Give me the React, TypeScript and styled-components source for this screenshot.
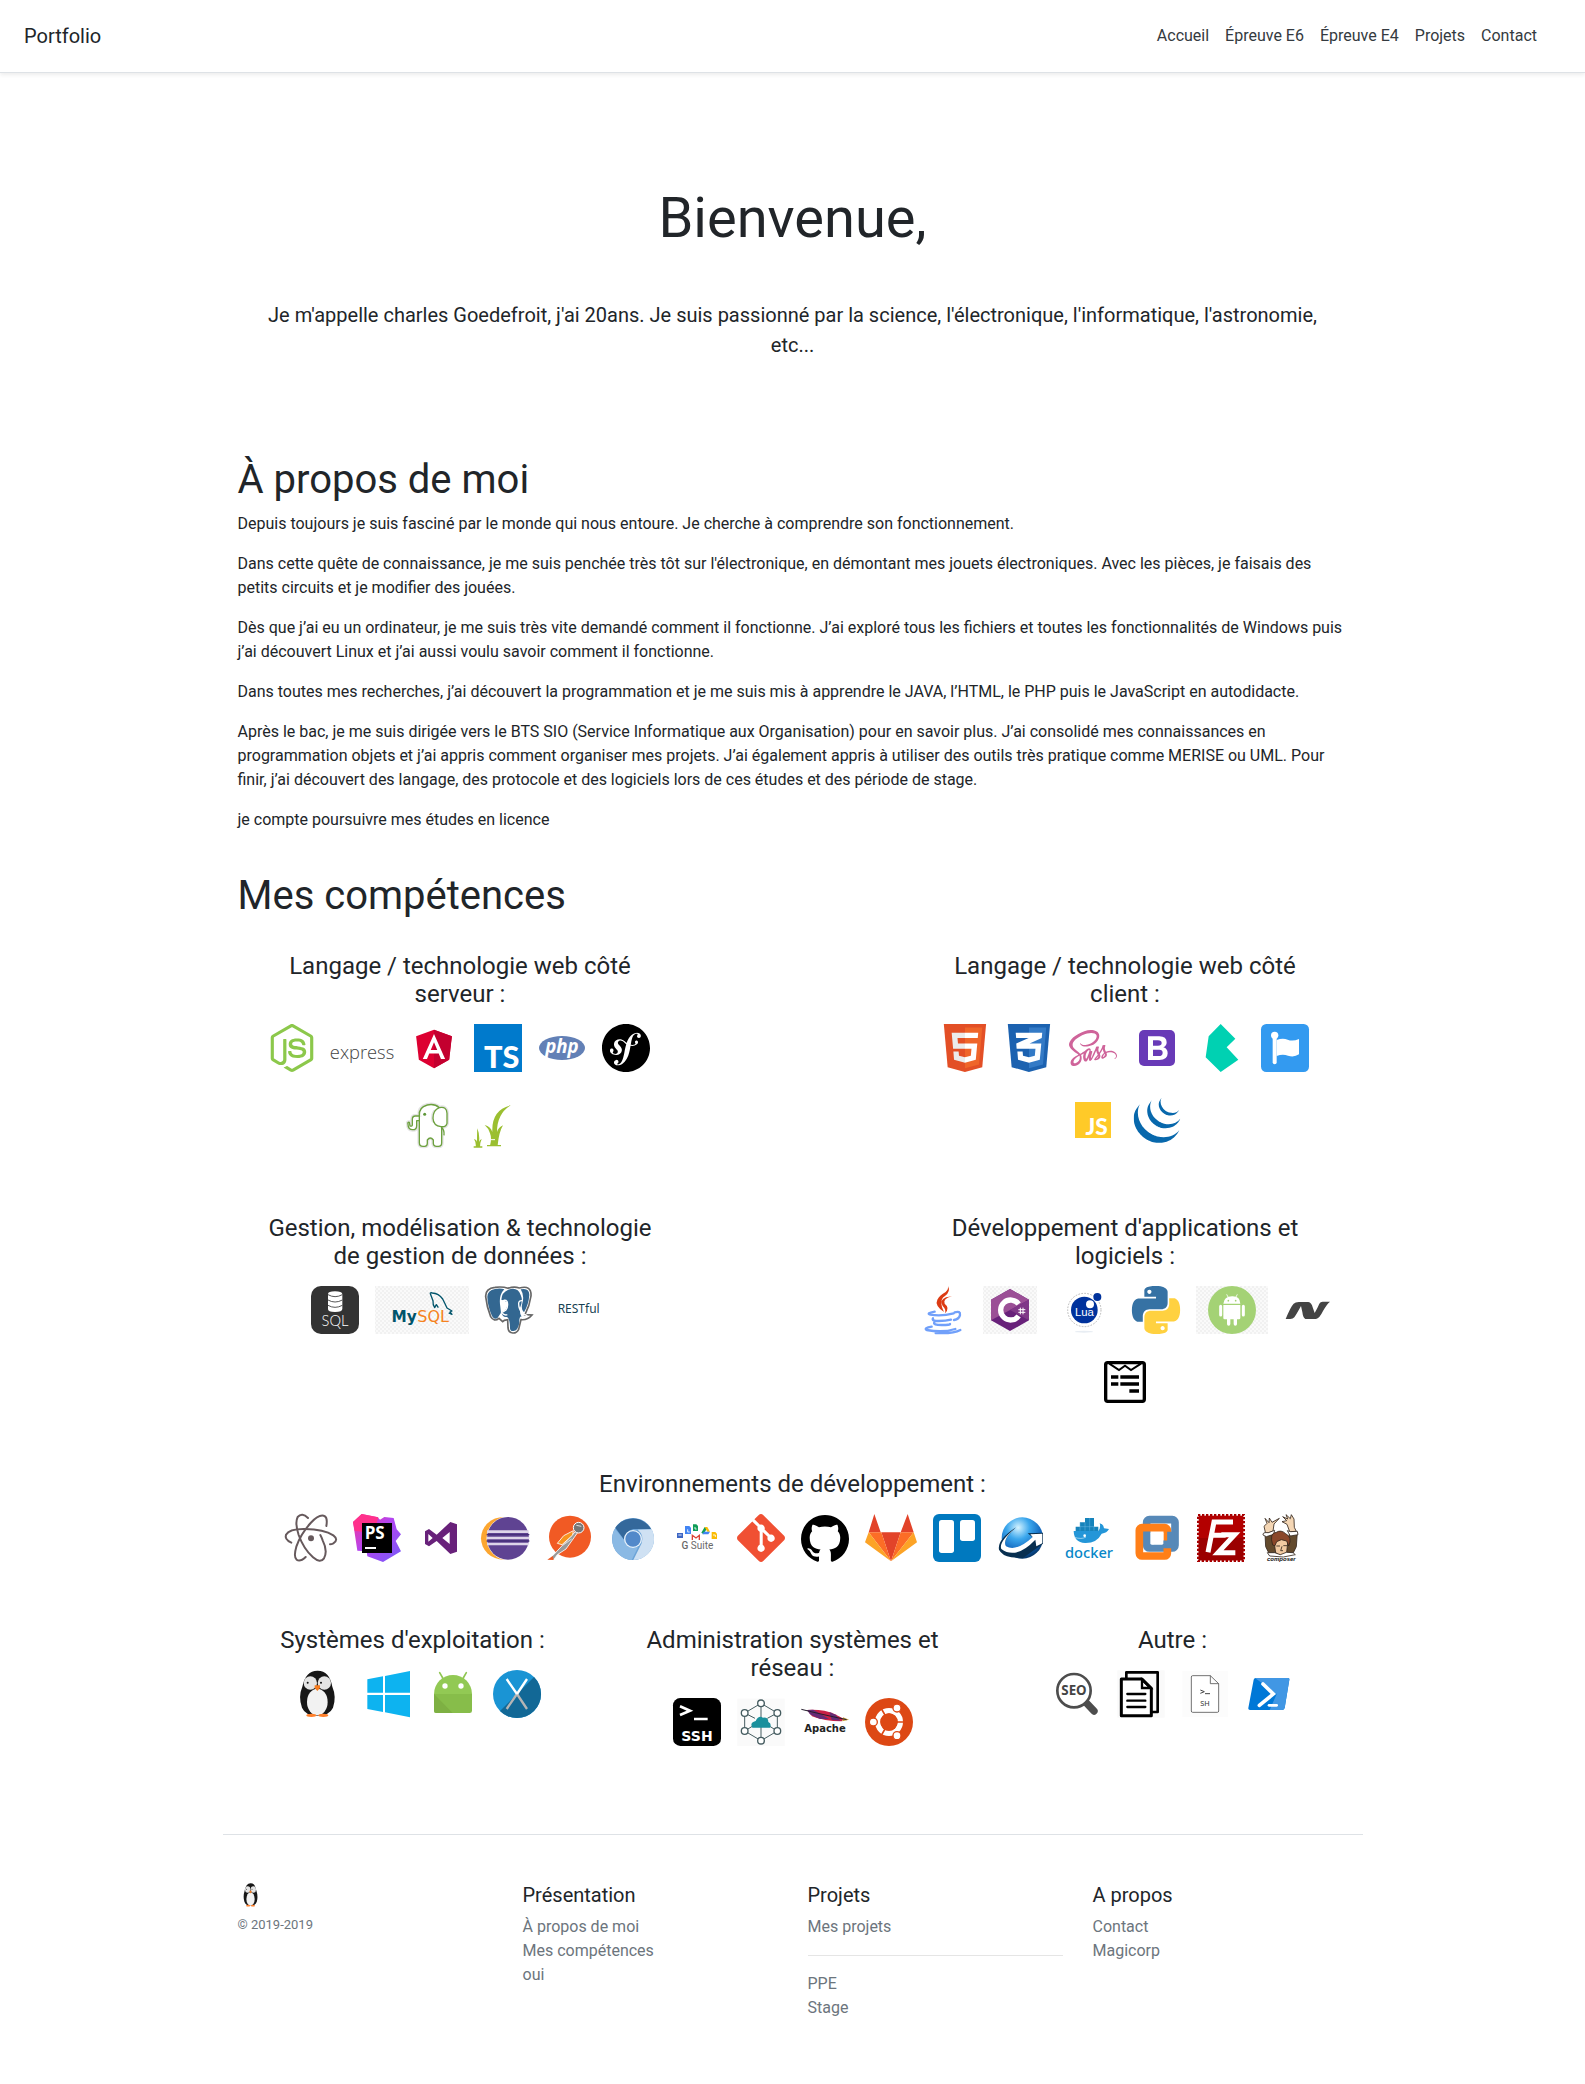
import React from "react";
import styled, { createGlobalStyle } from "styled-components";
import { SiNodedotjs, SiSymfony, SiJquery, SiGit, SiGithub } from "react-icons/si";
import { FaSass } from "react-icons/fa";

const Global = createGlobalStyle`
  *, *::before, *::after { box-sizing: border-box; }
  body {
    margin: 0;
    background: #fff;
    color: #212529;
    font: 400 16px/24px Roboto, "Liberation Sans", sans-serif;
  }
`;

/* ---------- layout ---------- */

const Header = styled.header`
  display: flex;
  align-items: center;
  justify-content: space-between;
  padding: 24px;
  margin-bottom: 16px;
  border-bottom: 1px solid #dee2e6;
  box-shadow: 0 2px 4px rgba(0, 0, 0, 0.075);
`;
const Brand = styled.a`
  font-size: 20px;
  color: #212529;
  text-decoration: none;
`;
const Nav = styled.nav`
  display: flex;
  gap: 16px;
  padding-right: 24px;
`;
const NavLink = styled.a`
  color: #343a40;
  text-decoration: none;
`;
const Container = styled.div`
  width: 100%;
  max-width: 1140px;
  margin: 0 auto;
`;
const Hero = styled.section`
  padding: 95px 31px 96px;
  text-align: center;
`;
const Display = styled.h1`
  margin: 0 0 48px;
  font-weight: 400;
  font-size: 56px;
  line-height: 68px;
`;
const Lead = styled.p`
  margin: 0;
  font-size: 20px;
  line-height: 30px;
`;
const Section = styled.section`
  padding: 0 15px 24px;
`;
const SectionTitle = styled.h2`
  margin: 0 0 8px;
  font-weight: 400;
  font-size: 40px;
  line-height: 48px;
`;
const Paragraph = styled.p`
  margin: 0 0 16px;
`;
const Skills = styled.div`
  display: flex;
  flex-direction: column;
  gap: 64px;
  padding-top: 24px;
  margin: 0 -15px;
`;
const SkillRow = styled.div<{ $columns: string }>`
  display: grid;
  grid-template-columns: ${(p) => p.$columns};
`;
const SkillGroup = styled.section`
  padding: 0 31px;
  text-align: center;
`;
const SkillTitle = styled.h3`
  margin: 0 0 16px;
  font-weight: 400;
  font-size: 24px;
  line-height: 28px;
`;
const Icons = styled.div`
  display: flex;
  flex-wrap: wrap;
  justify-content: center;
  gap: 24px 16px;
`;
const Svg = styled.svg`
  display: block;
  flex: none;
  overflow: visible;
`;
const Footer = styled.footer`
  display: grid;
  grid-template-columns: repeat(4, 1fr);
  margin-top: 64px;
  padding: 48px 0;
  border-top: 1px solid #dee2e6;
`;
const FooterColumn = styled.div`
  padding: 0 15px;
`;
const FooterTitle = styled.h4`
  margin: 0 0 8px;
  font-weight: 400;
  font-size: 20px;
  line-height: 24px;
`;
const FooterLinks = styled.ul`
  margin: 0;
  padding: 0;
  list-style: none;
`;
const FooterLink = styled.a`
  color: #6c757d;
  text-decoration: none;
`;
const Divider = styled.hr`
  margin: 16px 0;
  border: 0;
  border-top: 1px solid rgba(0, 0, 0, 0.1);
`;
const Copyright = styled.small`
  display: block;
  margin-top: 8px;
  font-size: 13px;
  line-height: 20px;
  color: #6c757d;
`;

/* ---------- icons: three drawing units to one pixel ---------- */

type LogoProps = { name: string; x: number; y: number; w?: number; h?: number; children: React.ReactNode };
const Logo = ({ name, x, y, w = 48, h = 48, children }: LogoProps) => (
  <Svg role="img" aria-label={name} width={w} height={h} viewBox={`${x} ${y} ${w * 3} ${h * 3}`}>
    {children}
  </Svg>
);

const Checker = ({ id }: { id: string }) => (
  <defs>
    <pattern id={id} width="12" height="12" patternUnits="userSpaceOnUse">
      <rect width="12" height="12" fill="#fafafa" />
      <path d="M0 0h6v6H0zM6 6h6v6H6z" fill="#f1f1f1" />
    </pattern>
  </defs>
);

const NodeLogo = () => (
  <Logo name="Node.js" x={0} y={0} w={44}>
    <SiNodedotjs x={-6} y={0} size={144} color="#8cc84b" />
  </Logo>
);
const ExpressLogo = () => (
  <Logo name="Express" x={237} y={42} w={64}>
    <text x="333" y="147" textAnchor="middle" fontFamily="Open Sans" fontWeight="300" fontSize="55" fill="#444">express</text>
  </Logo>
);
const AngularLogo = () => (
  <Svg role="img" aria-label="Angular" width={48} height={48} viewBox="0 0 250 250">
    <path fill="#dd0031" d="M125 30 31.900 63.200 46.100 186.300 125 230 203.900 186.300 218.100 63.200z" />
    <path fill="#c3002f" d="M125 30V230L203.900 186.300 218.100 63.200z" />
    <path fill="#fff" d="M125 52.100L66.800 182.600h21.700l11.700-29.200h49.400l11.700 29.200H183L125 52.100zM142 135.400H108l17-40.900z" />
  </Svg>
);
const TypeScriptLogo = () => (
  <Logo name="TypeScript" x={672} y={42}>
    <rect x="672" y="42" width="144" height="144" fill="#007acc" />
    <text x="755" y="174" textAnchor="middle" fontFamily="Lato" fontWeight="900" fontSize="92" fill="#fff">TS</text>
  </Logo>
);
const PhpLogo = () => (
  <Logo name="PHP" x={864} y={42}>
    <ellipse cx="936" cy="114" rx="69" ry="36" fill="#6280b6" />
    <text x="936" y="128" textAnchor="middle" fontFamily="Open Sans" fontStyle="italic" fontWeight="700" fontSize="56" fill="#fff">php</text>
  </Logo>
);
const SymfonyLogo = () => (
  <Logo name="Symfony" x={0} y={0}>
    <SiSymfony size={144} color="#000" />
  </Logo>
);
const ElephantLogo = () => {
  const outline =
    "M508 318V398Q508 409 519 409H524Q532 409 532 400V390Q541 378 550 390V400Q550 409 560 409H565Q575 409 575 399V350M508 318H496Q487 318 487 328V344Q487 350 480 348L478 337Q472 336 474 342Q474 359 488 359Q500 359 500 347V332H508M508 318Q505 292 532 285Q553 280 568 293M568 293Q590 288 591 310V340Q588 352 573 350Q550 348 549 325Q549 300 568 293";
  return (
    <Logo name="Éléphant PHP" x={456} y={258} h={54}>
      <path d={outline} fill="none" stroke="#e4e4e4" strokeWidth="12" strokeLinejoin="round" />
      <path d={outline} fill="#fff" stroke="#6da13f" strokeWidth="4" strokeLinejoin="round" />
      <path d="M573 352Q584 358 582 376" fill="none" stroke="#6da13f" strokeWidth="4" />
      <circle cx="524" cy="313" r="4.500" fill="#5f9739" />
    </Logo>
  );
};
const GrassLogo = () => (
  <Logo name="CakePHP Bake" x={648} y={258} w={52} h={54}>
    <path fill="#9bbf30" d="M720 407Q726 385 720 370 716 355 704 345 722 350 727 366 724 300 782 286 741 311 741 366 745 352 759 346 747 366 743 406zM677 412Q679 398 672 387 680 389 681 395 681 368 682 355 690 375 687 396 690 388 695 387 690 397 690 412zM711 405h42v4h-42zM671 409h26v4h-26z" />
    <path d="M722 389h13" stroke="#fff" strokeWidth="3" />
  </Logo>
);

const HtmlLogo = () => (
  <Svg role="img" aria-label="HTML5" width={48} height={48} viewBox="0 0 512 512">
    <path fill="#e34f26" d="M71 460 30 0H481L440 460 255 512z" />
    <path fill="#ef652a" d="M256 472 405 431 440 37H256z" />
    <path fill="#ebebeb" d="M256 208H181L176 150H256V94H114L129 265H256zM256 355 192 338 188 293H132L139 382 256 414z" />
    <path fill="#fff" d="M255 208V265H325L318 338 255 355V414L371 382 387 208zM255 94V150H392L397 94z" />
  </Svg>
);
const CssLogo = () => (
  <Svg role="img" aria-label="CSS3" width={48} height={48} viewBox="0 0 512 512">
    <path fill="#1c62b0" d="M71 460 30 0H481L440 460 255 512z" />
    <path fill="#337ac6" d="M256 472 405 431 440 37H256z" />
    <path fill="#fff" d="M114 94H397L392 150 262 208H387L371 382 256 414 139 382 132 293H188L192 338 256 355 318 338 325 265H124L120 208 252 150H119z" />
  </Svg>
);
const SassLogo = () => (
  <Logo name="Sass" x={0} y={0}>
    <FaSass size={144} color="#cf649a" />
  </Logo>
);
const BootstrapLogo = () => (
  <Logo name="Bootstrap" x={639} y={42}>
    <rect x="657" y="60" width="108" height="108" rx="15" fill="#683ab7" />
    <path
      fill="#fff"
      fillRule="evenodd"
      d="M684 79H718Q740 79 740 97 740 108 730 112 743 116 743 130 743 150 718 150H684zM699 91V107H714Q725 107 725 99T714 91zM699 119V138H716Q728 138 728 128T716 119z"
    />
  </Logo>
);
const BulmaLogo = () => (
  <Logo name="Bulma" x={831} y={42}>
    <path fill="#00d1b2" d="M902 42 946 86 920 112 955 149 902 186 857 142 866 79z" />
  </Logo>
);
const FlagLogo = () => (
  <Logo name="Font Awesome" x={1023} y={42}>
    <rect x="1023" y="42" width="144" height="144" rx="16" fill="#339af0" />
    <circle cx="1064" cy="76" r="11" fill="#fff" />
    <path d="M1064 80V157" stroke="#fff" strokeWidth="12" strokeLinecap="round" />
    <path fill="#fff" d="M1070 90Q1088 83 1103 89 1118 95 1137 87V133Q1122 143 1104 137 1088 131 1070 138z" />
  </Logo>
);
const JsLogo = () => (
  <Logo name="JavaScript" x={447} y={258}>
    <rect x="465" y="276" width="108" height="108" fill="#ffca28" />
    <text x="530" y="375" textAnchor="middle" fontFamily="Lato" fontWeight="900" fontSize="68" fill="#fff">JS</text>
  </Logo>
);
const JqueryLogo = () => (
  <Logo name="jQuery" x={0} y={0}>
    <SiJquery x={2} y={3} size={140} color="#0868ac" />
  </Logo>
);

const SqlLogo = () => (
  <Logo name="SQL" x={183} y={48}>
    <rect x="183" y="48" width="144" height="144" rx="30" fill="#333" />
    <path fill="#fff" d="M234 72Q234 64 255 64T277 72V117Q277 126 255 126T234 117z" />
    <path d="M234 74Q255 86 277 74M234 90Q255 102 277 90M234 106Q255 118 277 106" fill="none" stroke="#333" strokeWidth="2.500" />
    <text x="255" y="168" textAnchor="middle" fontFamily="Lato" fontWeight="300" fontSize="44" fill="#fff">SQL</text>
  </Logo>
);
const MysqlLogo = () => (
  <Logo name="MySQL" x={375} y={48} w={94}>
    <Checker id="mysql-bg" />
    <rect x="375" y="48" width="282" height="144" fill="url(#mysql-bg)" />
    <text x="500" y="157" textAnchor="end" fontFamily="DejaVu Sans" fontWeight="700" fontSize="46" fill="#00546b">My</text>
    <text x="502" y="157" fontFamily="DejaVu Sans" fontWeight="400" fontSize="48" fill="#f58220">SQL</text>
    <path d="M565 113 559 104 554 113Q548 105 549 92L541 71Q540 67 547 69 566 70 578 87 586 103 591 114L606 123 600 126 606 133 596 129" fill="none" stroke="#00546b" strokeWidth="4" strokeLinejoin="round" />
  </Logo>
);
const PostgresLogo = () => (
  <Logo name="PostgreSQL" x={705} y={48}>
    <path d="M735 52Q758 49 774 55 792 48 808 54 845 44 843 78 839 107 825 134L846 135Q833 151 813 149L806 178Q800 190 788 189 775 188 774 173L773 149 763 151 758 155 747 145Q732 157 722 140 710 110 707 80 706 55 735 52z" fill="#fff" stroke="#676767" strokeWidth="5" />
    <path d="M735 57Q752 54 763 58 745 76 751 110L753 128 742 145Q731 150 725 136 713 108 712 82 711 62 735 57zM812 58Q838 52 838 75 836 104 822 127 812 118 817 100 824 76 812 58zM775 59Q803 49 812 75 820 92 810 113 808 132 815 140 807 138 808 158 804 183 790 183 779 184 780 171 779 145 771 141 756 143 755 127L766 121Q773 112 772 96L754 89Q755 67 775 59z" fill="#336791" />
    <path d="M752 97Q765 86 771 94 776 107 768 120L755 128Q764 138 772 134M818 92Q805 90 806 102 806 117 817 130L832 137" fill="none" stroke="#fff" strokeWidth="4" />
  </Logo>
);
const RestLogo = () => (
  <Logo name="RESTful" x={897} y={48} w={60}>
    <text x="986" y="130" textAnchor="middle" fontFamily="Noto Sans" fontSize="36" fill="#173f52">RESTful</text>
  </Logo>
);

const JavaLogo = () => (
  <Logo name="Java" x={57} y={48}>
    <path fill="#dc3b13" d="M144 48Q153 65 134 79 115 91 132 126 103 106 112 89 119 76 137 66 146 58 144 48zM156 79Q128 86 134 101 151 114 135 130 139 118 128 108 117 91 138 82z" />
    <g fill="none" stroke="#71a0fa" strokeWidth="7" strokeLinecap="round">
      <path d="M104 125Q77 130 91 134 124 140 161 130M99 145Q94 153 116 153T153 149M103 157Q98 165 125 165T150 162M95 170Q70 174 80 180 128 189 166 177M164 127Q182 122 180 135 178 147 162 150M107 189Q160 192 181 180" />
    </g>
  </Logo>
);
const CSharpLogo = () => (
  <Logo name="C#" x={249} y={48} w={54}>
    <Checker id="csharp-bg" />
    <rect x="249" y="48" width="162" height="144" fill="url(#csharp-bg)" />
    <path d="M330 57 387 89V151L330 183 273 151V89z" fill="#68217a" />
    <path d="M330 57 387 89 273 151V89z" fill="#9b4f96" />
    <path d="M330 120 387 89V151z" fill="#803788" />
    <path d="M356 102A30 30 0 1 0 356 138" fill="none" stroke="#fff" strokeWidth="16" />
    <path d="M361 113V133M369 113V133M355 119H376M355 127H376" stroke="#fff" strokeWidth="3" />
  </Logo>
);
const LuaLogo = () => (
  <Logo name="Lua" x={459} y={48} w={63}>
    <circle cx="553" cy="120" r="50" fill="none" stroke="#aaa" strokeWidth="2.500" strokeDasharray="5 4" />
    <circle cx="553" cy="120" r="40" fill="#00329c" />
    <circle cx="570" cy="103" r="12" fill="#fff" />
    <circle cx="592" cy="81" r="12" fill="#00329c" />
    <ellipse cx="552" cy="185" rx="27" ry="3" fill="#e8edf3" />
    <text x="553" y="139" textAnchor="middle" fontFamily="Liberation Sans" fontSize="34" fill="#fff">Lua</text>
  </Logo>
);
const snake =
  "M14.25.18l.9.2.73.26.59.3.45.32.34.34.25.34.16.33.1.3.04.26.02.2-.01.13V8.5l-.05.63-.13.55-.21.46-.26.38-.3.31-.33.25-.35.19-.35.14-.33.1-.3.07-.26.04-.21.02H8.77l-.69.05-.59.14-.5.22-.41.27-.33.32-.27.35-.2.36-.15.37-.1.35-.07.32-.04.27-.02.21v3.06H3.17l-.21-.03-.28-.07-.32-.12-.35-.18-.36-.26-.36-.36-.35-.46-.32-.59-.28-.73-.21-.88-.14-1.05-.05-1.23.06-1.22.16-1.04.24-.87.32-.71.36-.57.4-.44.42-.33.42-.24.4-.16.36-.1.32-.05.24-.01h.16l.06.01h8.16v-.83H6.18l-.01-2.75-.02-.37.05-.34.11-.31.17-.28.25-.26.31-.23.38-.2.44-.18.51-.15.58-.12.64-.1.71-.06.77-.04.84-.02 1.27.05zm-6.3 1.98l-.23.33-.08.41.08.41.23.34.33.22.41.09.41-.09.33-.22.23-.34.08-.41-.08-.41-.23-.33-.33-.22-.41-.09-.41.09z";
const PythonLogo = () => (
  <Svg role="img" aria-label="Python" width={48} height={48} viewBox="0 0 24 24">
    <path fill="#3672a4" d={snake} />
    <path fill="#ffd140" d={snake} transform="rotate(180 12 12)" />
  </Svg>
);
const AndroidLogo = () => (
  <Logo name="Android" x={888} y={48} w={72}>
    <Checker id="android-bg" />
    <rect x="888" y="48" width="216" height="144" fill="url(#android-bg)" />
    <circle cx="996" cy="120" r="72" fill="#a4d275" />
    <path d="M985 83 980 73M1007 83 1012 73" stroke="#fff" strokeWidth="2.500" />
    <path fill="#fff" d="M970 101Q972 80 996 79T1021 101zM970 105H1021V144Q1021 148 1017 148H1011V162Q1011 167 1006 167T1001 162V148H991V162Q991 167 986 167T981 162V148H974Q970 148 970 144z" />
    <path d="M962 109V135M1030 109V135" stroke="#fff" strokeWidth="9" strokeLinecap="round" />
    <circle cx="985" cy="92" r="2.500" fill="#a4d275" />
    <circle cx="1007" cy="92" r="2.500" fill="#a4d275" />
  </Logo>
);
const DotNetLogo = () => (
  <Logo name=".NET" x={1152} y={48}>
    <path fill="#444" d="M1157 147Q1172 110 1181 101 1187 95 1200 96H1225Q1235 98 1238 112L1244 129Q1252 115 1258 101 1261 95 1268 95H1290Q1280 103 1269 123 1258 146 1248 147H1216Q1209 143 1207 126L1203 108Q1191 130 1183 142 1179 147 1171 147z" />
  </Logo>
);
const FormLogo = () => (
  <Logo name="Windev" x={603} y={264}>
    <rect x="617" y="278" width="116" height="116" rx="6" fill="#fff" stroke="#000" strokeWidth="10" />
    <path d="M628 281 657 300 675 287 693 300 723 281" fill="none" stroke="#000" strokeWidth="6" />
    <path d="M633 321H655M661 321H717M633 342H655M661 342H717M688 363H717" stroke="#000" strokeWidth="11" />
  </Logo>
);

const AtomLogo = () => (
  <Logo name="Atom" x={45} y={42} w={52}>
    <g fill="none" stroke="#66595c" strokeWidth="6" strokeLinecap="round">
      <path d="M64 128Q43 119 48 104 58 86 105 87 162 88 190 106 207 119 190 130 185 133 180 133" />
      <path d="M114 54Q96 36 83 51 74 68 86 105 101 147 129 172 151 191 162 175 174 153 158 121 154 110 151 105" />
      <path d="M169 78Q173 55 165 49 149 40 122 69 92 102 79 140 70 171 80 179 90 187 107 171" />
    </g>
    <circle cx="123" cy="115" r="9" fill="#66595c" />
  </Logo>
);
const PhpStormLogo = () => (
  <Logo name="PhpStorm" x={249} y={42}>
    <defs>
      <linearGradient id="storm" x1="0" y1="0" x2="1" y2="1">
        <stop offset="0" stopColor="#ff318c" />
        <stop offset="0.450" stopColor="#b345f1" />
        <stop offset="1" stopColor="#765af8" />
      </linearGradient>
    </defs>
    <path fill="url(#storm)" d="M249 66 275 42 323 52 330 59 343 51 371 54 380 88 393 103 377 123 393 154 339 186 292 169 290 154 262 152z" />
    <path fill="#ff318c" d="M249 66 275 42 325 52 320 70 276 70 276 95 254 92z" />
    <rect x="276" y="69" width="90" height="90" />
    <text x="314" y="118" textAnchor="middle" fontFamily="Open Sans" fontWeight="700" fontSize="51" fill="#fff">PS</text>
    <path fill="#fff" d="M285 141h33v6h-33z" />
  </Logo>
);
const VisualStudioLogo = () => (
  <Logo name="Visual Studio" x={441} y={42}>
    <path fill="#68217a" fillRule="evenodd" d="M541 66 561 73V155L541 162 500 123 477 139 465 132V94L477 87 500 104zM539 96 517 114 539 132zM475 102V125L488 114z" />
  </Logo>
);
const EclipseLogo = () => (
  <Logo name="Eclipse" x={633} y={42}>
    <ellipse cx="701" cy="115" rx="68" ry="64" fill="#fca630" />
    <circle cx="716" cy="115" r="66" fill="#fff" />
    <ellipse cx="714" cy="115" rx="63" ry="64" fill="#5f4392" />
    <path d="M651 95H776M650 114H778M651 132H776" stroke="#ddd5e9" strokeWidth="8" />
    <path d="M650 104H778M650 123H778" stroke="#46307a" strokeWidth="4" />
  </Logo>
);
const PostmanLogo = () => (
  <Logo name="Postman" x={825} y={42}>
    <circle cx="900" cy="110" r="63" fill="#f15a24" />
    <path d="M917 94 851 164 833 180 852 178 862 164 888 147 922 99z" fill="#999" stroke="#fff" strokeWidth="2.500" />
    <path d="M910 92 881 107 862 130 876 134 908 105z" fill="#f7931e" stroke="#fff" strokeWidth="2.500" />
    <path d="M848 168 832 179 851 180z" fill="#f15a24" />
    <circle cx="926" cy="83" r="16" fill="#777" stroke="#fff" strokeWidth="3" />
    <path d="M919 76 934 79M877 137 905 117" stroke="#ddd" strokeWidth="3" />
  </Logo>
);
const ChromiumLogo = () => (
  <Logo name="Chromium" x={1017} y={42}>
    <circle cx="1089" cy="117" r="63" fill="#6ca4d8" />
    <path d="M1036 83A63 63 0 0 1 1143 87H1090Q1065 93 1063 120z" fill="#34689b" />
    <path d="M1145 88A63 63 0 0 1 1090 180L1115 130Q1123 105 1103 89z" fill="#cfe1f3" />
    <path d="M1035 86A63 63 0 0 0 1085 180L1104 142Q1075 148 1062 120z" fill="#8ab9e4" />
    <circle cx="1089" cy="117" r="27" fill="#e8f2fa" />
    <circle cx="1089" cy="117" r="23" fill="#5289ca" />
  </Logo>
);
const GSuiteLogo = () => (
  <Logo name="G Suite" x={39} y={42}>
    <path fill="#4285f4" d="M75 78h13l5 5v19H75z" />
    <path fill="#0f9d58" d="M99 73h10l5 5v15H99z" />
    <path fill="#fbbc04" d="M155 96h11l5 5v16H155z" />
    <path fill="#3d66c4" d="M51 99h18v15H51z" />
    <path d="M83 88v8h6M105 81v6h5M55 105h10M159 105h7v6" fill="none" stroke="#fff" strokeWidth="2.500" />
    <path fill="#0f9d58" d="M134 81 141 85 131 103 124 98z" />
    <path fill="#fbbc04" d="M134 81h8l8 14h-8z" />
    <path fill="#4285f4" d="M132 95h18l-5 8h-18z" />
    <path d="M97 120V106l11 8 10-8v14" fill="none" stroke="#db4437" strokeWidth="4" />
    <text x="112" y="147" textAnchor="middle" fontFamily="Roboto" fontSize="30" fill="#696969"><tspan fontWeight="500">G</tspan> Suite</text>
  </Logo>
);
const GitLogo = () => (
  <Logo name="Git" x={0} y={0}>
    <SiGit size={144} color="#f05033" />
  </Logo>
);
const GithubLogo = () => (
  <Logo name="GitHub" x={0} y={0}>
    <SiGithub y={1} size={144} color="#000" />
  </Logo>
);
const GitlabLogo = () => (
  <Logo name="GitLab" x={615} y={42} w={52}>
    <path fill="#e24329" d="M693 184 664 97H722zM643 42 662 97H626zM743 42 761 97H722z" />
    <path fill="#fc6d26" d="M693 184 626 97H664zM693 184 761 97H722z" />
    <path fill="#fca326" d="M626 97 615 127 693 184zM761 97 771 127 693 184z" />
  </Logo>
);
const TrelloLogo = () => (
  <Logo name="Trello" x={819} y={42}>
    <rect x="819" y="42" width="144" height="144" rx="18" fill="#0079bf" />
    <rect x="837" y="60" width="45" height="99" rx="8" fill="#fff" />
    <rect x="900" y="60" width="45" height="63" rx="8" fill="#fff" />
  </Logo>
);
const GlobeLogo = () => (
  <Logo name="Internet Download" x={51} y={42}>
    <defs>
      <radialGradient id="globe" cx="0.400" cy="0.250" r="0.800">
        <stop offset="0" stopColor="#d5f3ff" />
        <stop offset="0.350" stopColor="#3ba7ed" />
        <stop offset="0.750" stopColor="#0c5db6" />
        <stop offset="1" stopColor="#042b50" />
      </radialGradient>
    </defs>
    <circle cx="127" cy="114" r="62" fill="url(#globe)" />
    <path d="M108 82Q51 120 57 149 66 167 94 172L129 174 189 131V98L143 100 158 112Q111 161 80 143 61 126 108 82z" fill="#082f50" />
    <path d="M103 87Q55 127 64 147 108 180 166 119L169 139 187 130V101L151 103 158 111Q110 156 78 139 66 120 103 87z" fill="#fff" />
  </Logo>
);
const DockerLogo = () => (
  <Logo name="Docker" x={243} y={42} w={56}>
    <path fill="#2496d8" d="M281 93H355Q363 82 359 70 371 72 372 85L387 87Q381 99 365 101 350 130 315 129 282 127 281 93z" />
    <path fill="#1683bb" d="M315 54h27v39h-27zM300 67h42v26h-42zM287 80h68v13h-68z" />
    <path d="M300 67V92M315 67V92M329 54V92M342 80V92M300 80H342" stroke="#69b6e3" strokeWidth="1.500" />
    <circle cx="314" cy="107" r="4" fill="#fff" />
    <path d="M283 112Q305 119 318 111" fill="none" stroke="#c8e9f8" strokeWidth="2" />
    <text x="327" y="173" textAnchor="middle" fontFamily="Noto Sans" fontWeight="500" fontSize="44" fill="#0787c8">docker</text>
  </Logo>
);
const VmwareLogo = () => (
  <Logo name="VMware" x={459} y={42}>
    <rect x="500" y="59" width="85" height="85" rx="8" fill="none" stroke="#5789b8" strokeWidth="23" />
    <rect x="478" y="83" width="84" height="85" rx="8" fill="none" stroke="#ff7f18" strokeWidth="23" />
    <path d="M573 95V133H522" fill="none" stroke="#5789b8" strokeWidth="23" />
    <rect x="512" y="96" width="38" height="38" rx="4" fill="#fff" />
  </Logo>
);
const FilezillaLogo = () => (
  <Logo name="FileZilla" x={651} y={42}>
    <rect x="656" y="47" width="134" height="134" fill="#b30000" />
    <path d="M656 114H790V181H656z" fill="#9b0000" />
    <rect x="654" y="45" width="138" height="138" fill="none" stroke="#a80000" strokeWidth="6" strokeDasharray="7 5" />
    <path d="M684 157 702 66H759M692 106H737M724 104H764L714 158H766" fill="none" stroke="#fff" strokeWidth="15" />
  </Logo>
);
const ComposerLogo = () => (
  <Logo name="Composer" x={843} y={42} w={39}>
    <g stroke="#34261d" strokeWidth="2.500" strokeLinejoin="round">
      <path d="M855 103 877 100 890 120 923 119 930 97 952 97 949 140 940 158 866 158 857 140z" fill="#634a2d" />
      <path d="M857 101 852 79 861 70 855 55 867 68 868 54 876 67 898 55 882 72 879 94zM929 95 921 73 906 65 920 62 908 50 923 57 918 44 931 56 934 44 942 57 943 82 949 94z" fill="#f4d6b4" />
      <path d="M849 105Q847 96 865 98L884 91 881 103 859 110zM922 92 932 95 952 94 954 104 931 108z" fill="#fff" />
      <path d="M881 117Q900 103 924 120L920 157Q904 174 887 158z" fill="#f1caa2" />
      <path d="M878 135Q867 99 889 97 903 88 917 101 938 112 926 138L920 123 904 119 890 125 885 137z" fill="#8b472a" />
      <path d="M869 168 862 158 884 158 901 164 919 157 939 158 946 164 910 171z" fill="#fff" />
    </g>
    <path d="M889 138H900M910 137H921M906 139 902 152H909" fill="none" stroke="#34261d" strokeWidth="2.500" />
    <text x="904" y="182" textAnchor="middle" fontFamily="Liberation Sans" fontStyle="italic" fontWeight="700" fontSize="18" fill="#111">composer</text>
  </Logo>
);

const Penguin = () => (
  <>
    <path d="M202 182Q238 181 247 230 260 260 249 293 238 317 202 317T156 293Q144 260 157 230 167 182 202 182z" fill="#171717" />
    <ellipse cx="202" cy="276" rx="31" ry="40" fill="#f2f2f2" />
    <circle cx="181" cy="219" r="20" fill="#e4e4e4" />
    <circle cx="223" cy="219" r="20" fill="#e4e4e4" />
    <circle cx="173" cy="218" r="3" fill="#111" />
    <circle cx="213" cy="218" r="3" fill="#111" />
    <path d="M194 226H210V234L202 243 194 234z" fill="#f47c20" />
    <ellipse cx="184" cy="316" rx="15" ry="5" fill="#ff7f2a" />
    <ellipse cx="220" cy="316" rx="15" ry="5" fill="#ff7f2a" />
  </>
);
const LinuxLogo = () => (
  <Logo name="Linux" x={102} y={180} w={65}>
    <Penguin />
  </Logo>
);
const WindowsLogo = () => (
  <Logo name="Windows" x={345} y={180}>
    <path fill="#0db3f0" d="M352 208 399 199V248H352zM405 198 480 183V248H405zM352 255H399V306L352 297zM405 255H480V322L405 307z" />
  </Logo>
);
const AndroidHeadLogo = () => (
  <Logo name="Android Studio" x={537} y={180}>
    <path d="M569 188 580 207M649 188 638 207" stroke="#8fc651" strokeWidth="5" strokeLinecap="round" />
    <path fill="#92c954" d="M552 252A57 57 0 0 1 666 252z" />
    <path fill="#87bd4a" d="M552 252H666V302Q666 309 659 309H559Q552 309 552 302z" />
    <path fill="#7eb043" d="M552 252 608 309H559Q552 309 552 302z" />
    <circle cx="585" cy="228" r="8" fill="#fff" />
    <circle cx="633" cy="228" r="8" fill="#fff" />
  </Logo>
);
const MacLogo = () => (
  <Logo name="OS X" x={729} y={180}>
    <circle cx="801" cy="252" r="72" fill="#1a94d4" />
    <path d="M852 201A72 72 0 0 1 750 303z" fill="#126896" />
    <path d="M770 297 801 252M831 297 801 252" stroke="#b5b5b5" strokeWidth="7" />
    <path d="M770 207 801 252M831 207 801 252" stroke="#fff" strokeWidth="7" />
  </Logo>
);

const SshLogo = () => (
  <Logo name="SSH" x={99} y={264}>
    <rect x="99" y="264" width="144" height="144" rx="22" />
    <path d="M120 289 150 302 120 315M162 327H203" fill="none" stroke="#fff" strokeWidth="8" />
    <text x="171" y="393" textAnchor="middle" fontFamily="DejaVu Sans" fontWeight="700" fontSize="42" fill="#fff">SSH</text>
  </Logo>
);
const NetworkLogo = () => (
  <Logo name="Réseau" x={291} y={264}>
    <rect x="292" y="266" width="142" height="142" fill="#fafafa" />
    <path d="M363 280 412 309V363L363 392 314 363V309zM363 280V392M314 309 345 325M412 309 382 325M314 363 340 347M412 363 386 347" fill="none" stroke="#455c60" strokeWidth="3" />
    <path d="M337 353Q328 338 347 333 356 315 369 323 385 321 385 336 396 341 390 353z" fill="#1b909c" />
    {[[363, 280], [412, 309], [412, 363], [363, 392], [314, 363], [314, 309]].map(([cx, cy]) => (
      <circle key={`${cx}-${cy}`} cx={cx} cy={cy} r="10" fill="#fff" stroke="#455c60" strokeWidth="4" />
    ))}
  </Logo>
);
const ApacheLogo = () => (
  <Logo name="Apache" x={483} y={264}>
    <path d="M501 300Q550 297 585 313L611 326 605 334Q552 334 516 319z" fill="#c92046" />
    <path d="M501 300 520 299 567 327 540 327 510 313zM568 306 587 314 601 332 575 329z" fill="#652b76" />
    <path d="M609 322 627 329 607 334z" fill="#c49c36" />
    <path d="M484 298Q540 312 620 329" fill="none" stroke="#251d2d" strokeWidth="3" />
    <text x="555" y="365" textAnchor="middle" fontFamily="DejaVu Sans" fontWeight="700" fontSize="30" fill="#222">Apache</text>
  </Logo>
);
const UbuntuLogo = () => (
  <Logo name="Ubuntu" x={675} y={264}>
    <circle cx="747" cy="336" r="72" fill="#dd4814" />
    <circle cx="747" cy="336" r="34" fill="none" stroke="#fff" strokeWidth="16" />
    <path d="M747 336H800M747 336 720 289M747 336 720 383" stroke="#dd4814" strokeWidth="5" />
    <circle cx="747" cy="336" r="26" fill="#dd4814" />
    {[[700, 336], [771, 294], [771, 377]].map(([cx, cy]) => (
      <circle key={`${cx}-${cy}`} cx={cx} cy={cy} r="12" fill="#fff" stroke="#dd4814" strokeWidth="4" />
    ))}
  </Logo>
);

const SeoLogo = () => (
  <Logo name="SEO" x={69} y={180}>
    <path d="M170 280 192 303" stroke="#4d4d4d" strokeWidth="22" strokeLinecap="round" />
    <circle cx="132" cy="242" r="50" fill="#fff" stroke="#4d4d4d" strokeWidth="8" />
    <text x="132" y="256" textAnchor="middle" fontFamily="Noto Sans" fontWeight="700" fontSize="40" fill="#444">SEO</text>
  </Logo>
);
const DocumentLogo = () => (
  <Logo name="Documentation" x={261} y={180}>
    <rect x="262" y="181" width="142" height="142" fill="#fafafa" />
    <path d="M289 207V187H383V306H366" fill="none" stroke="#000" strokeWidth="8" strokeLinejoin="round" />
    <path d="M274 207H336L364 235V317H274z" fill="#fff" stroke="#000" strokeWidth="9" strokeLinejoin="round" />
    <path d="M336 209V234H362zM292 252H346M292 272H346M292 291H346" fill="none" stroke="#000" strokeWidth="7" strokeLinecap="round" />
  </Logo>
);
const ShellLogo = () => (
  <Logo name="Shell" x={453} y={180}>
    <rect x="457" y="183" width="137" height="138" fill="#fcfcfc" />
    <path d="M488 197H541L566 221V303Q566 307 562 307H488Q484 307 484 303V201Q484 197 488 197zM541 197V221H566" fill="#fff" stroke="#555" strokeWidth="2.500" />
    <path d="M511 240 523 245 511 250M525 251H540" fill="none" stroke="#444" strokeWidth="3" />
    <text x="525" y="288" textAnchor="middle" fontFamily="Noto Sans" fontSize="22" fill="#333">SH</text>
  </Logo>
);
const PowerShellLogo = () => (
  <Logo name="PowerShell" x={645} y={180}>
    <path d="M677 204H774Q779 204 778 209L764 294Q762 300 756 300H660Q654 300 655 294L671 209Q672 204 677 204z" fill="#0078d7" />
    <path d="M675 204H774Q779 204 778 209L764 294Q762 300 756 300L719 300 740 252z" fill="#4197e4" />
    <path d="M699 222 730 252 688 286" fill="none" stroke="#fff" strokeWidth="11" strokeLinecap="round" />
    <path d="M717 286H740" stroke="#fff" strokeWidth="8" strokeLinecap="round" />
  </Logo>
);

/* ---------- content ---------- */

type Group = { title: string; icons: React.ComponentType[] };
const rows: { columns: string; groups: (Group | null)[] }[] = [
  {
    columns: "5fr 2fr 5fr",
    groups: [
      { title: "Langage / technologie web côté serveur", icons: [NodeLogo, ExpressLogo, AngularLogo, TypeScriptLogo, PhpLogo, SymfonyLogo, ElephantLogo, GrassLogo] },
      null,
      { title: "Langage / technologie web côté client", icons: [HtmlLogo, CssLogo, SassLogo, BootstrapLogo, BulmaLogo, FlagLogo, JsLogo, JqueryLogo] },
    ],
  },
  {
    columns: "5fr 2fr 5fr",
    groups: [
      { title: "Gestion, modélisation & technologie de gestion de données", icons: [SqlLogo, MysqlLogo, PostgresLogo, RestLogo] },
      null,
      { title: "Développement d'applications et logiciels", icons: [JavaLogo, CSharpLogo, LuaLogo, PythonLogo, AndroidLogo, DotNetLogo, FormLogo] },
    ],
  },
  {
    columns: "1fr",
    groups: [
      {
        title: "Environnements de développement",
        icons: [AtomLogo, PhpStormLogo, VisualStudioLogo, EclipseLogo, PostmanLogo, ChromiumLogo, GSuiteLogo, GitLogo, GithubLogo, GitlabLogo, TrelloLogo, GlobeLogo, DockerLogo, VmwareLogo, FilezillaLogo, ComposerLogo],
      },
    ],
  },
  {
    columns: "repeat(3, 1fr)",
    groups: [
      { title: "Systèmes d'exploitation", icons: [LinuxLogo, WindowsLogo, AndroidHeadLogo, MacLogo] },
      { title: "Administration systèmes et réseau", icons: [SshLogo, NetworkLogo, ApacheLogo, UbuntuLogo] },
      { title: "Autre", icons: [SeoLogo, DocumentLogo, ShellLogo, PowerShellLogo] },
    ],
  },
];

const story = [
  "Depuis toujours je suis fasciné par le monde qui nous entoure. Je cherche à comprendre son fonctionnement.",
  "Dans cette quête de connaissance, je me suis penchée très tôt sur l'électronique, en démontant mes jouets électroniques. Avec les pièces, je faisais des petits circuits et je modifier des jouées.",
  "Dès que j’ai eu un ordinateur, je me suis très vite demandé comment il fonctionne. J’ai exploré tous les fichiers et toutes les fonctionnalités de Windows puis j’ai découvert Linux et j’ai aussi voulu savoir comment il fonctionne.",
  "Dans toutes mes recherches, j’ai découvert la programmation et je me suis mis à apprendre le JAVA, l’HTML, le PHP puis le JavaScript en autodidacte.",
  "Après le bac, je me suis dirigée vers le BTS SIO (Service Informatique aux Organisation) pour en savoir plus. J’ai consolidé mes connaissances en programmation objets et j’ai appris comment organiser mes projets. J’ai également appris à utiliser des outils très pratique comme MERISE ou UML. Pour finir, j’ai découvert des langage, des protocole et des logiciels lors de ces études et des période de stage.",
  "je compte poursuivre mes études en licence",
];

const Links = ({ items }: { items: string[] }) => (
  <FooterLinks>
    {items.map((item) => (
      <li key={item}>
        <FooterLink href="#">{item}</FooterLink>
      </li>
    ))}
  </FooterLinks>
);

export default function App() {
  return (
    <>
      <Global />
      <Header>
        <Brand href="#">Portfolio</Brand>
        <Nav>
          {["Accueil", "Épreuve E6", "Épreuve E4", "Projets", "Contact"].map((item) => (
            <NavLink key={item} href="#">{item}</NavLink>
          ))}
        </Nav>
      </Header>
      <Container>
        <main>
          <Hero>
            <Display>Bienvenue,</Display>
            <Lead>
              Je m'appelle charles Goedefroit, j'ai 20ans. Je suis passionné par la science, l'électronique,
              l'informatique, l'astronomie, etc...
            </Lead>
          </Hero>
          <Section>
            <SectionTitle>À propos de moi</SectionTitle>
            {story.map((text) => (
              <Paragraph key={text}>{text}</Paragraph>
            ))}
          </Section>
          <Section>
            <SectionTitle>Mes compétences</SectionTitle>
            <Skills>
              {rows.map((row, r) => (
                <SkillRow key={r} $columns={row.columns}>
                  {row.groups.map((group, g) =>
                    group ? (
                      <SkillGroup key={g}>
                        <SkillTitle>{`${group.title}\u00a0:`}</SkillTitle>
                        <Icons>
                          {group.icons.map((Icon, i) => (
                            <Icon key={i} />
                          ))}
                        </Icons>
                      </SkillGroup>
                    ) : (
                      <div key={g} />
                    )
                  )}
                </SkillRow>
              ))}
            </Skills>
          </Section>
        </main>
        <Footer>
          <FooterColumn>
            <Svg role="img" aria-label="Accueil" width={24} height={24} viewBox="108 180 180 144" preserveAspectRatio="none">
              <Penguin />
            </Svg>
            <Copyright>© 2019-2019</Copyright>
          </FooterColumn>
          <FooterColumn>
            <FooterTitle>Présentation</FooterTitle>
            <Links items={["À propos de moi", "Mes compétences", "oui"]} />
          </FooterColumn>
          <FooterColumn>
            <FooterTitle>Projets</FooterTitle>
            <Links items={["Mes projets"]} />
            <Divider />
            <Links items={["PPE", "Stage"]} />
          </FooterColumn>
          <FooterColumn>
            <FooterTitle>A propos</FooterTitle>
            <Links items={["Contact", "Magicorp"]} />
          </FooterColumn>
        </Footer>
      </Container>
    </>
  );
}
